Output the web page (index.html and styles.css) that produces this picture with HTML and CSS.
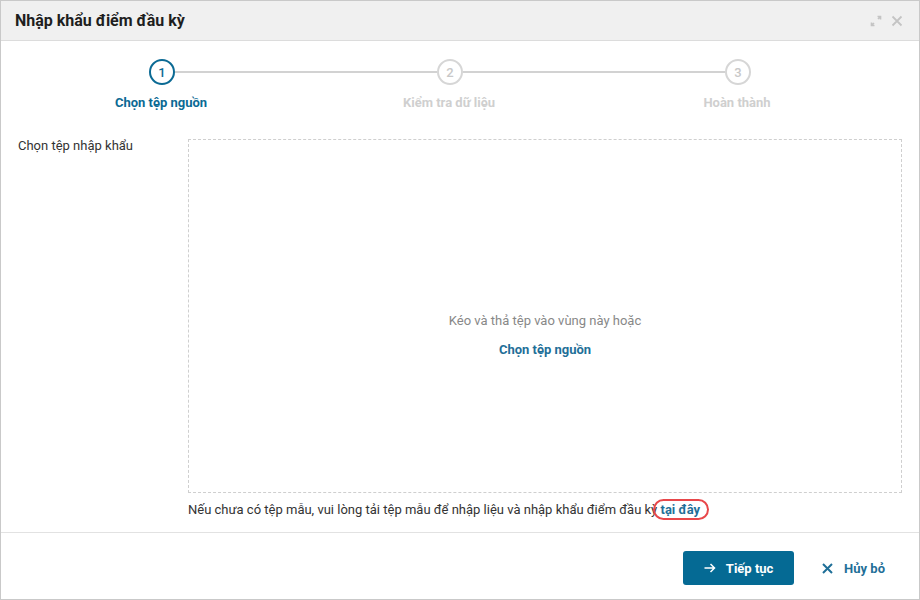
FILE: index.html
```html
<!DOCTYPE html>
<html lang="vi">
<head>
    <meta charset="UTF-8">
    <title>Nhập khẩu điểm đầu kỳ</title>
    <link rel="stylesheet" href="styles.css">
</head>
<body>
    <div class="dialog">
        <div class="dialog-header">
            <div class="dialog-title">Nhập khẩu điểm đầu kỳ</div>
            <div class="header-tools">
                <svg class="tool-icon" width="12" height="12" viewBox="0 0 12 12">
                    <path d="M7.5 1.5h3v3M10.5 1.5L8 4M4.5 10.5h-3v-3M1.5 10.5L4 8" fill="none" stroke="#c4c4c4" stroke-width="1.6"/>
                </svg>
                <svg class="tool-icon" width="12" height="12" viewBox="0 0 12 12">
                    <path d="M1.5 1.5l9 9M10.5 1.5l-9 9" fill="none" stroke="#c4c4c4" stroke-width="1.8"/>
                </svg>
            </div>
        </div>

        <div class="stepper">
            <div class="step-track">
                <div class="step-dot active">1</div>
                <div class="step-line"></div>
                <div class="step-dot">2</div>
                <div class="step-line"></div>
                <div class="step-dot">3</div>
            </div>
            <div class="step-labels">
                <div class="step-label active">Chọn tệp nguồn</div>
                <div class="step-label">Kiểm tra dữ liệu</div>
                <div class="step-label">Hoàn thành</div>
            </div>
        </div>

        <div class="dialog-body">
            <div class="field-label">Chọn tệp nhập khẩu</div>
            <div class="field-main">
                <div class="dropzone">
                    <div class="drop-hint">Kéo và thả tệp vào vùng này hoặc</div>
                    <div class="drop-link">Chọn tệp nguồn</div>
                </div>
                <div class="template-note">
                    Nếu chưa có tệp mẫu, vui lòng tải tệp mẫu để nhập liệu và nhập khẩu điểm đầu kỳ <span class="note-link">tại đây</span>
                </div>
            </div>
        </div>

        <div class="dialog-footer">
            <button class="btn btn-primary">
                <svg width="12" height="10" viewBox="0 0 12 10">
                    <path d="M0.5 5h10M6.5 1l4 4-4 4" fill="none" stroke="#fff" stroke-width="1.5"/>
                </svg>
                <span>Tiếp tục</span>
            </button>
            <button class="btn btn-link">
                <svg width="11" height="11" viewBox="0 0 11 11">
                    <path d="M1 1l9 9M10 1l-9 9" fill="none" stroke="#1f6f98" stroke-width="2"/>
                </svg>
                <span>Hủy bỏ</span>
            </button>
        </div>
    </div>
</body>
</html>
```

FILE: styles.css
```css
:root {
    --blue: #0b6a94;
    --link-blue: #1f6f98;
    --muted: #d2d2d2;
    --text: #333;
}
html, body {
    margin: 0;
    padding: 0;
    background: #fff;
    font-family: Roboto, 'Liberation Sans', Arial, sans-serif;
    color: var(--text);
}
.dialog {
    width: 920px;
    height: 600px;
    box-sizing: border-box;
    border: 1px solid #c9c9c9;
    display: flex;
    flex-direction: column;
}
.dialog-header {
    height: 39px;
    flex-shrink: 0;
    background: #f0f0f0;
    border-bottom: 1px solid #dcdcdc;
    display: flex;
    align-items: center;
    justify-content: space-between;
    padding: 0 16px 0 14px;
}
.dialog-title {
    font-size: 16px;
    font-weight: 700;
    color: #1e1e1e;
}
.header-tools {
    display: flex;
    align-items: center;
    gap: 9px;
}
.tool-icon {
    display: block;
}
.stepper {
    padding-top: 18px;
}
.step-track {
    display: flex;
    align-items: center;
    padding: 0 168px 0 148px;
}
.step-dot {
    width: 26px;
    height: 26px;
    box-sizing: border-box;
    border: 2px solid #d6d6d6;
    border-radius: 50%;
    font-size: 13px;
    font-weight: 500;
    color: #c8c8c8;
    display: flex;
    align-items: center;
    justify-content: center;
    background: #fff;
}
.step-dot.active {
    border-color: var(--blue);
    color: var(--blue);
}
.step-line {
    flex: 1;
    height: 2px;
    background: var(--muted);
}
.step-labels {
    display: grid;
    grid-template-columns: 288px 288px 288px;
    padding-left: 16px;
    margin-top: 8px;
}
.step-label {
    text-align: center;
    font-size: 13px;
    font-weight: 700;
    color: #cfcfcf;
    line-height: 20px;
}
.step-label.active {
    color: var(--blue);
}
.dialog-body {
    flex: 1;
    display: flex;
    padding: 26px 17px 0 17px;
    border-bottom: 1px solid #e2e2e2;
}
.field-label {
    width: 170px;
    font-size: 13px;
    line-height: 14px;
    color: #333;
}
.field-main {
    flex: 1;
    display: flex;
    flex-direction: column;
}
.dropzone {
    height: 354px;
    box-sizing: border-box;
    border: 1px dashed #cfcfcf;
    display: flex;
    flex-direction: column;
    align-items: center;
    padding-top: 171px;
}
.drop-hint {
    font-size: 13px;
    line-height: 20px;
    color: #888;
}
.drop-link {
    margin-top: 9px;
    font-size: 13px;
    font-weight: 700;
    line-height: 20px;
    color: var(--link-blue);
}
.template-note {
    margin-top: 7px;
    font-size: 13px;
    line-height: 20px;
    color: #333;
}
.note-link {
    position: relative;
    font-weight: 700;
    color: var(--link-blue);
}
.note-link::after {
    content: "";
    position: absolute;
    left: -8px;
    right: -9px;
    top: -3px;
    bottom: -3px;
    border: 2px solid #e8474a;
    border-radius: 13px;
}
.dialog-footer {
    height: 62px;
    flex-shrink: 0;
    display: flex;
    align-items: center;
    justify-content: flex-end;
    padding: 4px 22px 0 0;
    gap: 16px;
}
.btn {
    display: flex;
    align-items: center;
    border: none;
    font-family: inherit;
    font-size: 13px;
    font-weight: 700;
    cursor: pointer;
}
.btn-primary {
    width: 111px;
    height: 34px;
    background: #056a94;
    color: #fff;
    border-radius: 3px;
    justify-content: center;
    gap: 10px;
}
.btn-link {
    background: none;
    color: var(--link-blue);
    padding: 0 12px;
    height: 34px;
    gap: 11px;
}
```
